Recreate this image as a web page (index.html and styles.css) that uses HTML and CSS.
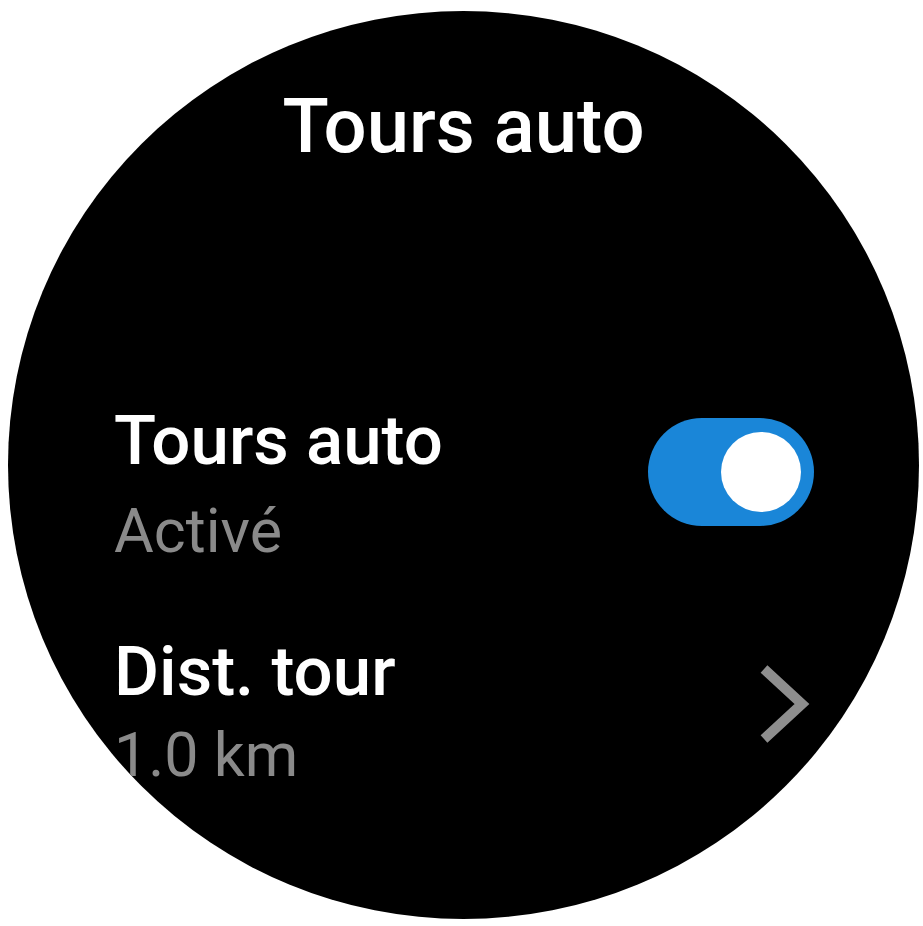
FILE: index.html
```html
<!DOCTYPE html>
<html lang="fr">
<head>
<meta charset="utf-8">
<title>Tours auto</title>
<link rel="stylesheet" href="styles.css">
</head>
<body>
<div class="watch">
  <h1 class="title">Tours auto</h1>
  <div class="list">
    <div class="row row-toggle">
      <div class="texts">
        <div class="label">Tours auto</div>
        <div class="value value-first">Activé</div>
      </div>
      <div class="toggle"><div class="knob"></div></div>
    </div>
    <div class="row row-link">
      <div class="texts">
        <div class="label">Dist. tour</div>
        <div class="value value-second">1.0 km</div>
      </div>
      <svg class="chevron" width="56" height="88" viewBox="0 0 56 88">
        <polyline points="8,9 46,44 8,79" fill="none" stroke="#8e8e8e" stroke-width="10" stroke-linejoin="miter" stroke-linecap="butt"/>
      </svg>
    </div>
  </div>
</div>
</body>
</html>
```
FILE: styles.css
```css
html, body {
  margin: 0;
  padding: 0;
  background: #ffffff;
}
body {
  font-family: Roboto, "Noto Sans", "Liberation Sans", sans-serif;
}
.watch {
  width: 911px;
  height: 908px;
  margin: 11px 0 0 8px;
  background: #000;
  border-radius: 50%;
  overflow: hidden;
  box-sizing: border-box;
  padding-top: 70px;
}
.title {
  margin: 0;
  font-size: 76px;
  line-height: 90px;
  font-weight: 500;
  color: #fff;
  text-align: center;
}
.list {
  margin-top: 220px;
  padding: 0 105px 0 106px;
  display: flex;
  flex-direction: column;
  gap: 51px;
}
.row {
  display: flex;
  justify-content: space-between;
  align-items: flex-start;
}
.texts {
  display: flex;
  flex-direction: column;
}
.label {
  font-size: 69px;
  line-height: 100px;
  font-weight: 500;
  color: #fff;
}
.value {
  font-size: 61px;
  color: #8a8a8a;
}
.value-first {
  line-height: 80px;
}
.value-second {
  line-height: 66px;
}
.toggle {
  margin-top: 27px;
  width: 166px;
  height: 108px;
  border-radius: 54px;
  background: #1a86d8;
  display: flex;
  align-items: center;
  justify-content: flex-end;
  padding-right: 13px;
  box-sizing: border-box;
}
.knob {
  width: 80px;
  height: 80px;
  border-radius: 50%;
  background: #fff;
}
.chevron {
  margin-top: 38px;
  margin-right: 2px;
  display: block;
}
```
